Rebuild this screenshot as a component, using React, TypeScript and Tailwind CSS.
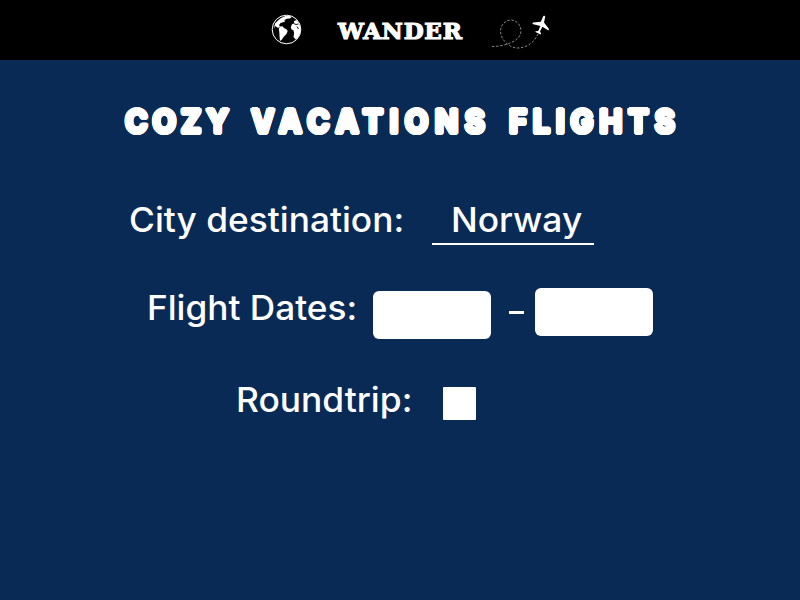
import React from "react";

function Globe() {
  return (
    <svg className="ml-[271px] h-8 w-8 shrink-0" viewBox="0 0 32 32">
      <circle cx="15.5" cy="15.5" r="14.3" fill="#000" stroke="#fff" strokeWidth="1" />
      <path d="M7 6.500 10 4l5-2.200L19 2l1.500 1.300-1.500 1.200-3 .2-2.500 1.300.5 1.500-2 .7L9.500 9 8 11l1 1.500-2 1.500-2.500-2L3 14.500 4 9.500Z" fill="#fff" />
      <path d="M9 12.500 11.500 12.300 13 14l2.700 1.500 1 1.500-1.200 3-1.500 1.500-1.500 1.500-1.500 2.500-2 1.500-.5-5L8.300 18l-.5-3.300Z" fill="#fff" />
      <path d="M23 7 25.500 6l2.300 3 1.900 5-.3 5-2.700 5-2 1.500-2.200-2.500.6-3.500-.5-3-2-1-.8-2 1-3 2.300-1.500Z" fill="#fff" />
      <path d="M22.500 9.500 25 10.500 27.500 10M26 12.500l1.500 2.500" fill="none" stroke="#000" strokeWidth=".9" />
    </svg>
  );
}

function PlaneTrail() {
  return (
    <svg className="ml-[25px] h-10 w-[62px] shrink-0" viewBox="490 10 62 40">
      <path
        d="M492 46.500C505 46.500 521 41 521 31c0-6-4.500-11-10-11s-10.500 5-10.500 11c0 8 8 17 17 17 9.500 0 17-6 20.500-14"
        fill="none"
        stroke="#aaa"
        strokeWidth=".8"
        strokeDasharray="2.500 1.600"
      />
      <path
        d="M543.200 16.300c1-1 2.200-.4 1.900 1l-1.100 5.200 5 6.400-.5 1.700-6.100-3.900-2.400 4.900 1.200 2.100-.5.700-5.300-2.300.2-.9 2.600-.1 2.200-5-8.100-2.200.7-1.500 7.900-.7Z"
        fill="#fff"
      />
    </svg>
  );
}

function Header() {
  return (
    <header className="flex h-[60px] items-center bg-black">
      <Globe />
      <span className="ml-[35px] mt-px w-[127px] whitespace-nowrap font-['DejaVu_Serif',serif] text-[23px] font-bold leading-none tracking-[0.8px] [-webkit-text-stroke:1.2px_white]">
        WANDER
      </span>
      <PlaneTrail />
    </header>
  );
}

export default function App() {
  return (
    <div className="h-[600px] w-[800px] overflow-hidden bg-[#0a2a56] font-[Inter,sans-serif] text-[34px] font-medium leading-none text-white">
      <Header />
      <h1 className="flex h-[122px] whitespace-nowrap pt-[46px] text-[32px] font-extrabold [text-shadow:1.6px_0_white,1.5px_0.6px_white,1.15px_1.15px_white,0.6px_1.5px_white,0_1.6px_white,-0.6px_1.5px_white,-1.15px_1.15px_white,-1.5px_0.6px_white,-1.6px_0_white,-1.5px_-0.6px_white,-1.15px_-1.15px_white,-0.6px_-1.5px_white,0_-1.6px_white,0.6px_-1.5px_white,1.15px_-1.15px_white,1.5px_-0.6px_white]">
        <span className="ml-[125px] w-[126px] origin-left scale-x-[0.96] tracking-[4.7px]">COZY</span>
        <span className="w-[258px] origin-left scale-x-[0.96] tracking-[6.6px]">VACATIONS</span>
        <span className="origin-left scale-x-[0.96] tracking-[6px]">FLIGHTS</span>
      </h1>
      <main className="whitespace-nowrap">
        <div className="flex h-[88px] pt-[21px]">
          <span className="ml-[129px] w-[303px] origin-left scale-x-[1.038]">City destination:</span>
          <span className="h-[42px] w-[162px] border-b-2 border-white pl-[19px]">
            <span className="block origin-left scale-x-[1.04]">Norway</span>
          </span>
        </div>
        <div className="flex h-[92px] pt-[18px]">
          <span className="ml-[147px] w-[226px] origin-left scale-x-[1.035] pt-[3px]">Flight Dates:</span>
          <span className="mt-[3px] h-[48px] w-[118px] rounded-md bg-white" />
          <span className="ml-[18px] mt-[23px] h-[3px] w-[15px] bg-white" />
          <span className="ml-[11px] h-[48px] w-[118px] rounded-md bg-white" />
        </div>
        <div className="flex pt-[21px]">
          <span className="ml-[236px] w-[207px] origin-left scale-x-[1.04]">Roundtrip:</span>
          <span className="mt-1 h-[33px] w-[33px] rounded-[1px] bg-white" />
        </div>
      </main>
    </div>
  );
}
